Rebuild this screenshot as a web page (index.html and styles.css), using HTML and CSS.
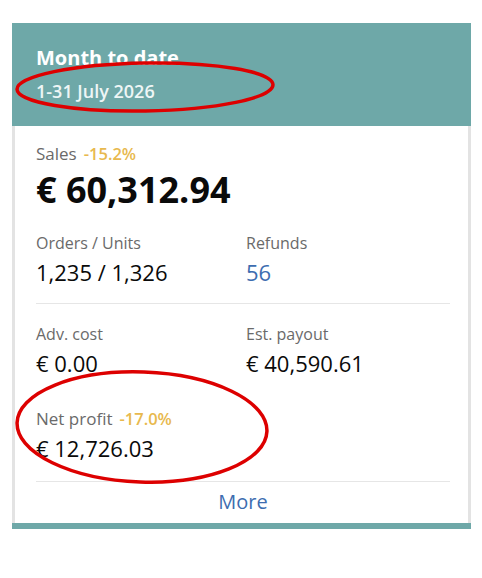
FILE: index.html
```html
<!DOCTYPE html>
<html lang="en">
<head>
<meta charset="utf-8">
<title>Month to date</title>
<link rel="stylesheet" href="styles.css">
</head>
<body>
<div class="card">
  <div class="card-head">
    <div class="title">Month to date</div>
    <div class="range">1-31 July 2026</div>
  </div>
  <div class="card-body">
    <div class="label sales with-pct">Sales<span class="pct">-15.2%</span></div>
    <div class="big">€ 60,312.94</div>
    <div class="grid first">
      <div class="cell">
        <div class="label">Orders / Units</div>
        <div class="value">1,235 / 1,326</div>
      </div>
      <div class="cell">
        <div class="label">Refunds</div>
        <div class="value link">56</div>
      </div>
    </div>
    <div class="divider"></div>
    <div class="grid second">
      <div class="cell">
        <div class="label">Adv. cost</div>
        <div class="value">€ 0.00</div>
      </div>
      <div class="cell">
        <div class="label">Est. payout</div>
        <div class="value">€ 40,590.61</div>
      </div>
      <div class="cell">
        <div class="label with-pct">Net profit<span class="pct">-17.0%</span></div>
        <div class="value">€ 12,726.03</div>
      </div>
    </div>
    <div class="divider"></div>
    <div class="more">More</div>
  </div>
</div>
<svg class="marks" width="482" height="578" viewBox="0 0 482 578">
  <ellipse cx="145" cy="87" rx="128" ry="24" transform="rotate(-1 145 87)"/>
  <ellipse cx="142" cy="427" rx="125" ry="55" transform="rotate(2 142 427)"/>
</svg>
</body>
</html>
```
FILE: styles.css
```css
html, body {
  margin: 0;
  padding: 0;
  background: #ffffff;
}
body {
  font-family: "Open Sans", "Noto Sans", sans-serif;
  color: #111111;
  width: 482px;
  height: 578px;
  position: relative;
  overflow: hidden;
}
.card {
  margin: 23px 0 0 12px;
  width: 459px;
  border-bottom: 6px solid #6ea8a8;
}
.card-head {
  background: #6ea8a8;
  color: #ffffff;
  padding: 22px 24px 23px 24px;
}
.title {
  font-size: 20px;
  font-weight: 700;
  line-height: 26px;
}
.range {
  margin-top: 8px;
  font-size: 18px;
  font-weight: 600;
  line-height: 24px;
  color: #eef6f6;
}
.card-body {
  border-left: 3px solid #e3e3e3;
  border-right: 3px solid #e3e3e3;
  padding: 18px 18px 8px 21px;
}
.label {
  font-size: 16px;
  line-height: 22px;
  color: #6a6a6a;
}
.label.with-pct {
  font-size: 17px;
}
.label.sales {
  line-height: 20px;
}
.pct {
  margin-left: 7px;
  font-size: 16.5px;
  font-weight: 600;
  color: #e8b94e;
}
.big {
  margin-top: 1px;
  font-size: 36px;
  font-weight: 700;
  line-height: 49px;
  color: #0a0a0a;
}
.grid {
  display: grid;
  grid-template-columns: 210px 1fr;
  row-gap: 30px;
}
.grid.first {
  margin-top: 18px;
  margin-bottom: 16px;
}
.grid.second {
  margin-top: 19px;
  margin-bottom: 18px;
}
.value {
  margin-top: 3px;
  font-size: 22px;
  line-height: 30px;
  color: #0a0a0a;
}
.value.link {
  color: #3d6db0;
}
.divider {
  height: 1px;
  background: #e6e6e6;
}
.more {
  margin-top: 7px;
  text-align: center;
  font-size: 20px;
  line-height: 26px;
  color: #3d6db0;
}
.marks {
  position: absolute;
  left: 0;
  top: 0;
  pointer-events: none;
}
.marks ellipse {
  fill: none;
  stroke: #dd0000;
  stroke-width: 3.5;
}
```
